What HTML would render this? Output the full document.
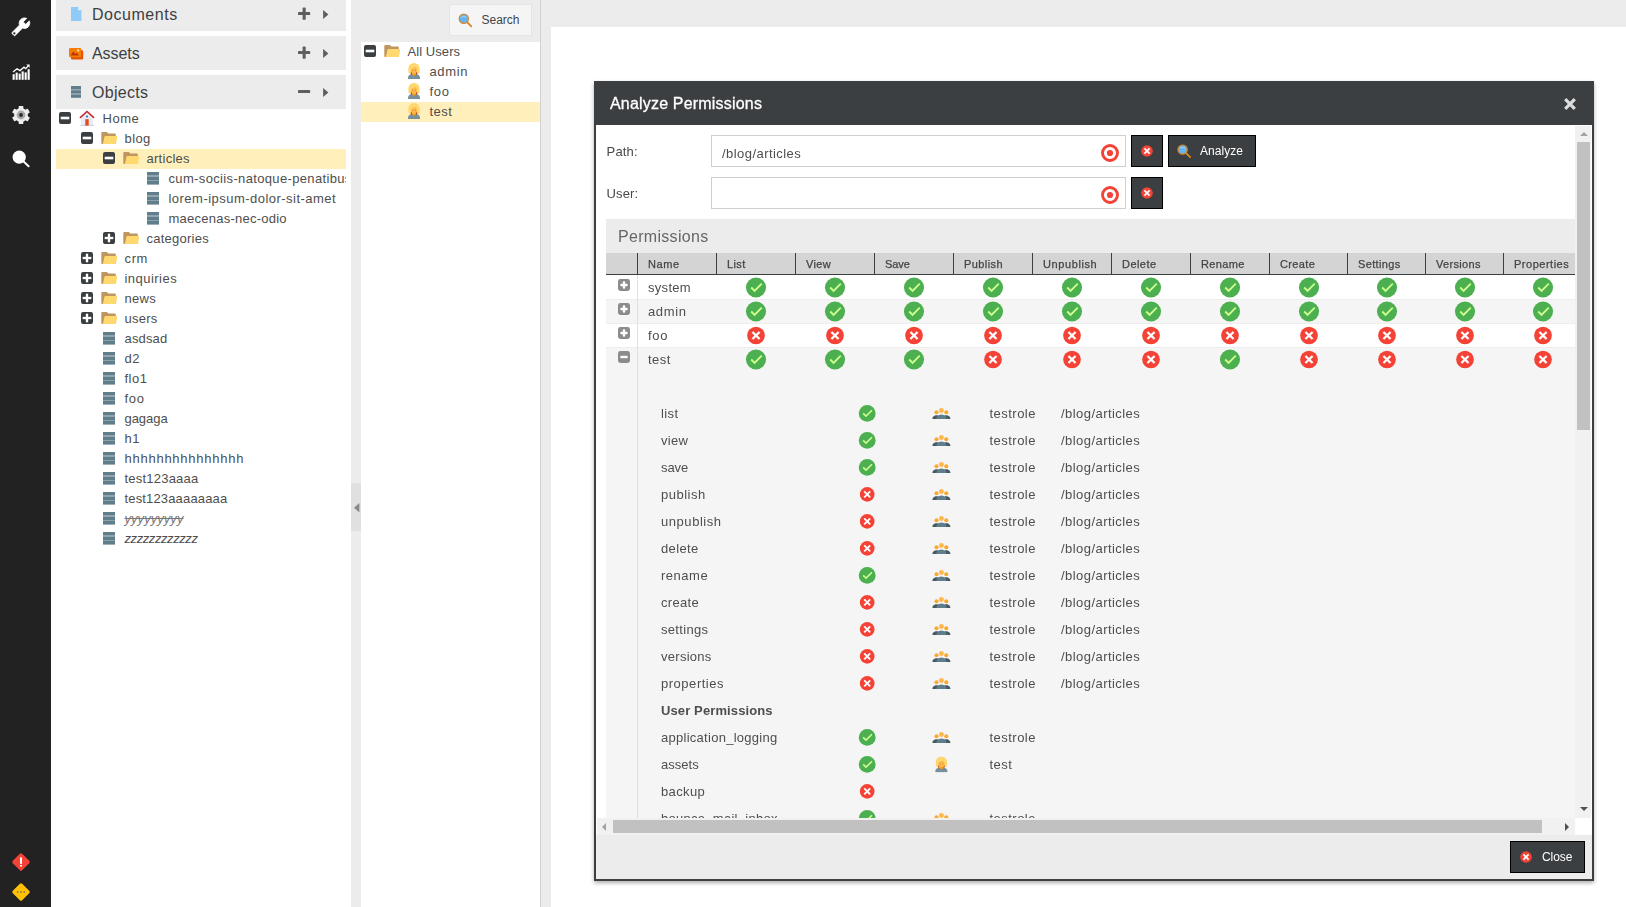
<!DOCTYPE html>
<html lang="en"><head><meta charset="utf-8"><title>Pimcore - Analyze Permissions</title>
<style>
*{box-sizing:border-box;margin:0;padding:0}
html,body{width:1626px;height:907px;overflow:hidden;background:#fff}
body{font-family:"Liberation Sans",sans-serif;font-size:13px;color:#4e4e4e;position:relative}
.a{position:absolute}
svg{display:block;overflow:visible}
#sb{left:0;top:0;width:51px;height:907px;background:#222}
#sb svg{position:absolute}
.ph{left:56px;width:290px;height:34px;background:#ececec}
.ph .t{position:absolute;left:36px;top:1px;line-height:34px;font-size:16px;color:#3c3f41;white-space:nowrap}
.ph svg{position:absolute}
.row{position:absolute;height:20px;line-height:20px;white-space:nowrap;overflow:hidden}
.row.sel{background:#ffefbb}
.row .t{position:absolute;top:0}
.row svg{position:absolute}
.g{background:#ececec}
.btn{position:absolute;background:#3c3f41;border:1px solid #000;color:#fff;font-size:12px;white-space:nowrap}
.btn svg{position:absolute}
.btn .t{position:absolute;top:0;line-height:30px}
.inp{position:absolute;background:#fff;border:1px solid #cfcfcf;height:32px;line-height:30px}
.hc{position:absolute;top:0;height:22px;border-left:1px solid #3c3f41;border-bottom:1px solid #3c3f41;line-height:22px;font-size:11px;color:#444;-webkit-text-stroke:.25px #444;padding-left:10px;white-space:nowrap;overflow:hidden}
.gr{position:absolute;left:0;width:976px;height:24px;border-bottom:1px solid #ededed;line-height:24px}
.gr .n{position:absolute;left:42px;top:0}
.gr svg{position:absolute}
.sr{position:absolute;left:55px;height:27px;line-height:27px;white-space:nowrap}
.sr span.c{position:absolute;top:0}
.sr svg{position:absolute}
</style></head><body>
<svg width="0" height="0" style="position:absolute"><defs>
<symbol id="ok" viewBox="0 0 48 48"><circle fill="#4CAF50" cx="24" cy="24" r="21"/><polygon fill="#CCFF90" points="34.6,14.6 21,28.2 15.4,22.6 12.6,25.4 21,33.8 37.4,17.4"/></symbol>
<symbol id="no" viewBox="0 0 48 48"><circle fill="#F44336" cx="24" cy="24" r="20"/><g fill="#fff"><rect x="12.6" y="21.4" width="22.8" height="5.2" transform="rotate(45 24 24)"/><rect x="12.6" y="21.4" width="22.8" height="5.2" transform="rotate(-45 24 24)"/></g></symbol>
<symbol id="no2" viewBox="0 0 48 48"><circle fill="#F44336" cx="24" cy="24" r="20"/><g fill="#fff"><rect x="11.5" y="21" width="25" height="6" transform="rotate(45 24 24)"/><rect x="11.5" y="21" width="25" height="6" transform="rotate(-45 24 24)"/></g></symbol>
<symbol id="fold" viewBox="0 0 16 16"><path fill="#bf9560" d="M1.3,1.9H5.8L7.4,3.6H13.8Q14.8,3.6 14.8,4.6V13Q14.8,14 13.8,14H1.3Q0.3,14 0.3,13V2.9Q0.3,1.9 1.3,1.9Z"/><path fill="#ffd970" d="M4.4,6H15.4Q16.5,6 16.3,7L15.1,13Q14.9,14 13.9,14H1.9L3.4,6.9Q3.6,6 4.4,6Z"/></symbol>
<symbol id="user" viewBox="0 0 16 16"><path fill="#78909c" d="M2,15.9V14.2Q2,12.2 5,11H11Q14,12.2 14,14.2V15.9Z"/><ellipse cx="8" cy="5.3" rx="5.6" ry="5.3" fill="#ffd76e"/><rect x="2.4" y="4.5" width="11.2" height="6.3" rx="2.6" fill="#ffd76e"/><rect x="4.9" y="8.8" width="1.2" height="2.4" fill="#bf360c"/><rect x="9.9" y="8.8" width="1.2" height="2.4" fill="#bf360c"/><polygon fill="#ff9800" points="6,9.8 10,9.8 9.3,12 8,13.2 6.7,12"/><ellipse cx="8" cy="7.5" rx="3" ry="3.4" fill="#ffb74d"/><path d="M4.6,6.2Q7,5.6 9.4,3.6L11,5.2V3H4.6Z" fill="#ffd76e"/><circle cx="6.6" cy="7.3" r=".55" fill="#b98a3a"/><circle cx="9.5" cy="7.3" r=".55" fill="#b98a3a"/></symbol>
<symbol id="grp" viewBox="0 0 48 48"><circle fill="#FFA726" cx="12" cy="21" r="5"/><circle fill="#FFA726" cx="36" cy="21" r="5"/><path fill="#455A64" d="M2,34.7c0,0,2.8-6.3,10-6.3s10,6.3,10,6.3V38H2V34.7z M46,34.7c0,0-2.8-6.3-10-6.3s-10,6.3-10,6.3V38h20V34.7z"/><circle fill="#FFB74D" cx="24" cy="17" r="6"/><path fill="#607D8B" d="M36,34.1c0,0-3.3-7.5-12-7.5s-12,7.5-12,7.5V38h24V34.1z"/></symbol>
<symbol id="obj" viewBox="0 0 16 16"><g fill="#607d8b"><rect x="2" y="2" width="12" height="3.6"/><rect x="2" y="6.4" width="12" height="3.6"/><rect x="2" y="10.9" width="12" height="3.7"/></g><g fill="#8298a3"><rect x="2" y="5.6" width="12" height=".8"/><rect x="2" y="10" width="12" height=".9"/></g></symbol>
<symbol id="home" viewBox="0 0 16 16"><path fill="#e8eaf6" d="M2.2,7.4L8,2.4L13.8,7.4V15.6H2.2Z"/><path fill="#c5cae9" d="M1,14.8H15V15.8H1Z"/><path fill="#e64a19" d="M6.3,9.2H9.7V15.6H6.3Z"/><path fill="none" stroke="#c62828" stroke-width="1.5" d="M0.9,7.9L8,1.5L15.1,7.9"/><circle cx="8" cy="6.6" r="1" fill="#1565c0"/></symbol>
<symbol id="exm" viewBox="0 0 12 12"><rect width="12" height="12" rx="2" fill="#3c3f41"/><rect x="1.7" y="4.7" width="8.6" height="2.6" fill="#fff"/></symbol>
<symbol id="exp" viewBox="0 0 12 12"><rect width="12" height="12" rx="2" fill="#3c3f41"/><rect x="1.7" y="4.85" width="8.6" height="2.3" fill="#fff"/><rect x="4.85" y="1.7" width="2.3" height="8.6" fill="#fff"/></symbol>
<symbol id="gxm" viewBox="0 0 12 12"><rect width="12" height="12" rx="2.4" fill="#8c8c8c"/><rect x="2.4" y="4.8" width="7.2" height="2.4" fill="#fff"/></symbol>
<symbol id="gxp" viewBox="0 0 12 12"><rect width="12" height="12" rx="2.4" fill="#8c8c8c"/><rect x="2.4" y="4.8" width="7.2" height="2.4" fill="#fff"/><rect x="4.8" y="2.4" width="2.4" height="7.2" fill="#fff"/></symbol>
<symbol id="mag" viewBox="0 0 16 16"><path d="M9.6,9.6L14.2,14.2" stroke="#d4882a" stroke-width="1.9" stroke-linecap="round"/><circle cx="6.2" cy="6.2" r="4.9" fill="#64b5f6" stroke="#d4882a" stroke-width="1.35"/><path d="M3.6,4.6Q6.2,2.6 8.8,4.6" stroke="#bbdefb" stroke-width=".8" fill="none"/></symbol>
<symbol id="tgt" viewBox="0 0 20 20"><circle cx="10" cy="10" r="7.5" fill="none" stroke="#f44336" stroke-width="2.9"/><circle cx="10" cy="10" r="3.1" fill="#f44336"/></symbol>
</defs></svg>
<div class="a g" style="left:351px;top:0;width:10px;height:907px"></div>
<div class="a" style="left:351px;top:483px;width:10px;height:48px;background:#e0e0e0"></div>
<svg class="a" style="left:353.7px;top:502.5px" width="5.4" height="9.4" viewBox="0 0 5.4 9.4"><path d="M5.4,0V9.4L0,4.7Z" fill="#888"/></svg>
<div class="a g" style="left:361px;top:0;width:180px;height:42px"></div>
<div class="a" style="left:540px;top:0;width:1px;height:907px;background:#d0d0d0"></div>
<div class="a g" style="left:541px;top:0;width:10px;height:907px"></div>
<div class="a g" style="left:551px;top:0;width:1075px;height:27px"></div>
<div id="sb" class="a">
<svg style="left:11px;top:17px" width="19.6" height="19.6" viewBox="0 0 24 24"><g transform="translate(24,0) scale(-1,1)"><path fill="#fff" stroke="#fff" stroke-width=".9" stroke-linejoin="round" d="M22.7 19l-9.1-9.1c.9-2.3.4-5-1.5-6.9-2-2-5-2.4-7.4-1.3L9 6 6 9 1.6 4.7C.4 7.1.9 10.1 2.9 12.1c1.9 1.9 4.6 2.4 6.9 1.5l9.1 9.1c.4.4 1 .4 1.4 0l2.3-2.3c.5-.4.5-1.1.1-1.4z"/><circle cx="19.9" cy="20" r="1.4" fill="#222"/></g></svg>
<svg style="left:12px;top:63px" width="18" height="17" viewBox="0 0 18 17"><g fill="#fff"><rect x=".6" y="11.2" width="2.1" height="5.6"/><rect x="3.6" y="9.6" width="2.1" height="7.2"/><rect x="6.6" y="10.6" width="2.1" height="6.2"/><rect x="9.6" y="8.4" width="2.1" height="8.4"/><rect x="12.6" y="9.4" width="2.1" height="7.4"/><rect x="15.6" y="6.2" width="2.1" height="10.6"/></g><path d="M1,9L5,5.8L8,7.6L12,4.2L13.6,5.6L16.2,3" fill="none" stroke="#fff" stroke-width="1.3"/><path d="M14.2,1.4H17.6V4.8Z" fill="#fff"/></svg>
<svg style="left:12px;top:106.4px" width="18" height="18" viewBox="-9 -9 18 18"><g fill="#eee"><circle r="6.9"/><rect x="-2.3" y="-9" width="4.6" height="4" rx=".6" transform="rotate(0)"/><rect x="-2.3" y="-9" width="4.6" height="4" rx=".6" transform="rotate(60)"/><rect x="-2.3" y="-9" width="4.6" height="4" rx=".6" transform="rotate(120)"/><rect x="-2.3" y="-9" width="4.6" height="4" rx=".6" transform="rotate(180)"/><rect x="-2.3" y="-9" width="4.6" height="4" rx=".6" transform="rotate(240)"/><rect x="-2.3" y="-9" width="4.6" height="4" rx=".6" transform="rotate(300)"/></g><circle r="4.4" fill="#aaa"/><circle r="1.9" fill="#2a2a2a"/></svg>
<svg style="left:11px;top:149px" width="20" height="20" viewBox="0 0 20 20"><circle cx="8.2" cy="8.2" r="6.6" fill="#fff"/><path d="M12.6,12.6L17.6,17.2" stroke="#fff" stroke-width="2" stroke-linecap="round"/></svg>
<svg style="left:11px;top:852px" width="20" height="20" viewBox="-10 -10 20 20"><rect x="-6.6" y="-6.6" width="13.2" height="13.2" rx="1.6" transform="rotate(45)" fill="#f44336"/><rect x="-1" y="-4.6" width="2" height="6.4" fill="#fff"/><rect x="-1" y="3" width="2" height="1.5" fill="#fff"/></svg>
<svg style="left:11px;top:882px" width="20" height="20" viewBox="-10 -10 20 20"><rect x="-6.6" y="-6.6" width="13.2" height="13.2" rx="1.6" transform="rotate(45)" fill="#ffc107"/><g fill="#7a7a52"><rect x="-4.1" y="-.8" width="1.6" height="1.6"/><rect x="-.8" y="-.8" width="1.6" height="1.6"/><rect x="2.5" y="-.8" width="1.6" height="1.6"/></g></svg>
</div>
<div class="a ph" style="top:-3px"><svg style="left:14.8px;top:9.9px" width="10.4" height="14" viewBox="0 0 10.4 14"><path d="M0,0H7.2L10.4,3.2V14H0Z" fill="#90caf9"/><path d="M7.2,0V3.2H10.4Z" fill="#e1f5fe"/></svg><span class="t"><span style="letter-spacing:0.534px;">Documents</span></span><svg style="left:242px;top:11px" width="13" height="13" viewBox="0 0 13 13"><g fill="#5c5e60"><rect x="0" y="4.1" width="12.2" height="3" rx=".9"/><rect x="4.6" y="-.5" width="3.1" height="12.3" rx=".9"/></g></svg><svg style="left:267px;top:12px" width="6" height="11" viewBox="0 0 6 11"><path d="M0.1,0.9L5.4,5.45L0.1,10Z" fill="#5c5e60"/></svg></div>
<div class="a ph" style="top:36px"><svg style="left:13px;top:11.5px" width="14.2" height="11.4" viewBox="0 0 14.2 11.4"><rect x="2" y="2.2" width="12.2" height="9.2" rx="1.2" fill="#e65100"/><rect x="0" y="0" width="12.2" height="9.2" rx="1.2" fill="#f57c00"/><path d="M1.6,7.6L4.4,3.2L6.4,6L7.8,4.6L10,7.6Z" fill="#bf360c"/><rect x="8.2" y="1.6" width="2" height="1.7" fill="#fff3e0"/></svg><span class="t"><span style="letter-spacing:-0.061px;">Assets</span></span><svg style="left:242px;top:11px" width="13" height="13" viewBox="0 0 13 13"><g fill="#5c5e60"><rect x="0" y="4.1" width="12.2" height="3" rx=".9"/><rect x="4.6" y="-.5" width="3.1" height="12.3" rx=".9"/></g></svg><svg style="left:267px;top:12px" width="6" height="11" viewBox="0 0 6 11"><path d="M0.1,0.9L5.4,5.45L0.1,10Z" fill="#5c5e60"/></svg></div>
<div class="a ph" style="top:75px"><svg style="left:15px;top:11.2px" width="10" height="11.8" viewBox="0 0 10 11.8"><g fill="#607d8b"><rect width="10" height="3.4"/><rect y="4.2" width="10" height="3.4"/><rect y="8.4" width="10" height="3.4"/></g><g fill="#7f96a1"><rect y="3.4" width="10" height=".8"/><rect y="7.6" width="10" height=".8"/></g></svg><span class="t"><span style="letter-spacing:0.278px;">Objects</span></span><svg style="left:242px;top:11px" width="13" height="13" viewBox="0 0 13 13"><g fill="#5c5e60"><rect x="0" y="4.1" width="12.2" height="3" rx=".9"/></g></svg><svg style="left:267px;top:12px" width="6" height="11" viewBox="0 0 6 11"><path d="M0.1,0.9L5.4,5.45L0.1,10Z" fill="#5c5e60"/></svg></div>
<div class="row" style="left:56px;top:109px;width:290px"><svg style="left:3px;top:3px" width="12" height="12"><use href="#exm" x="0" y="0" width="12" height="12"/></svg><svg style="left:23px;top:1px" width="16" height="16"><use href="#home" x="0" y="0" width="16" height="16"/></svg><span class="t" style="left:46.5px;"><span style="letter-spacing:0.538px;">Home</span></span></div>
<div class="row" style="left:56px;top:129px;width:290px"><svg style="left:25px;top:3px" width="12" height="12"><use href="#exm" x="0" y="0" width="12" height="12"/></svg><svg style="left:45px;top:1px" width="16" height="16"><use href="#fold" x="0" y="0" width="16" height="16"/></svg><span class="t" style="left:68.5px;"><span style="letter-spacing:0.413px;">blog</span></span></div>
<div class="row sel" style="left:56px;top:149px;width:290px"><svg style="left:47px;top:3px" width="12" height="12"><use href="#exm" x="0" y="0" width="12" height="12"/></svg><svg style="left:67px;top:1px" width="16" height="16"><use href="#fold" x="0" y="0" width="16" height="16"/></svg><span class="t" style="left:90.5px;"><span style="letter-spacing:0.276px;">articles</span></span></div>
<div class="row" style="left:56px;top:169px;width:290px"><svg style="left:89px;top:1px" width="16" height="16"><use href="#obj" x="0" y="0" width="16" height="16"/></svg><span class="t" style="left:112.5px;"><span style="letter-spacing:0.350px;">cum-sociis-natoque-penatibus</span></span></div>
<div class="row" style="left:56px;top:189px;width:290px"><svg style="left:89px;top:1px" width="16" height="16"><use href="#obj" x="0" y="0" width="16" height="16"/></svg><span class="t" style="left:112.5px;"><span style="letter-spacing:0.474px;">lorem-ipsum-dolor-sit-amet</span></span></div>
<div class="row" style="left:56px;top:209px;width:290px"><svg style="left:89px;top:1px" width="16" height="16"><use href="#obj" x="0" y="0" width="16" height="16"/></svg><span class="t" style="left:112.5px;"><span style="letter-spacing:0.242px;">maecenas-nec-odio</span></span></div>
<div class="row" style="left:56px;top:229px;width:290px"><svg style="left:47px;top:3px" width="12" height="12"><use href="#exp" x="0" y="0" width="12" height="12"/></svg><svg style="left:67px;top:1px" width="16" height="16"><use href="#fold" x="0" y="0" width="16" height="16"/></svg><span class="t" style="left:90.5px;"><span style="letter-spacing:0.239px;">categories</span></span></div>
<div class="row" style="left:56px;top:249px;width:290px"><svg style="left:25px;top:3px" width="12" height="12"><use href="#exp" x="0" y="0" width="12" height="12"/></svg><svg style="left:45px;top:1px" width="16" height="16"><use href="#fold" x="0" y="0" width="16" height="16"/></svg><span class="t" style="left:68.5px;"><span style="letter-spacing:0.643px;">crm</span></span></div>
<div class="row" style="left:56px;top:269px;width:290px"><svg style="left:25px;top:3px" width="12" height="12"><use href="#exp" x="0" y="0" width="12" height="12"/></svg><svg style="left:45px;top:1px" width="16" height="16"><use href="#fold" x="0" y="0" width="16" height="16"/></svg><span class="t" style="left:68.5px;"><span style="letter-spacing:0.464px;">inquiries</span></span></div>
<div class="row" style="left:56px;top:289px;width:290px"><svg style="left:25px;top:3px" width="12" height="12"><use href="#exp" x="0" y="0" width="12" height="12"/></svg><svg style="left:45px;top:1px" width="16" height="16"><use href="#fold" x="0" y="0" width="16" height="16"/></svg><span class="t" style="left:68.5px;"><span style="letter-spacing:0.309px;">news</span></span></div>
<div class="row" style="left:56px;top:309px;width:290px"><svg style="left:25px;top:3px" width="12" height="12"><use href="#exp" x="0" y="0" width="12" height="12"/></svg><svg style="left:45px;top:1px" width="16" height="16"><use href="#fold" x="0" y="0" width="16" height="16"/></svg><span class="t" style="left:68.5px;"><span style="letter-spacing:0.239px;">users</span></span></div>
<div class="row" style="left:56px;top:329px;width:290px"><svg style="left:45px;top:1px" width="16" height="16"><use href="#obj" x="0" y="0" width="16" height="16"/></svg><span class="t" style="left:68.5px;"><span style="letter-spacing:0.146px;">asdsad</span></span></div>
<div class="row" style="left:56px;top:349px;width:290px"><svg style="left:45px;top:1px" width="16" height="16"><use href="#obj" x="0" y="0" width="16" height="16"/></svg><span class="t" style="left:68.5px;"><span style="letter-spacing:0.470px;">d2</span></span></div>
<div class="row" style="left:56px;top:369px;width:290px"><svg style="left:45px;top:1px" width="16" height="16"><use href="#obj" x="0" y="0" width="16" height="16"/></svg><span class="t" style="left:68.5px;"><span style="letter-spacing:0.505px;">flo1</span></span></div>
<div class="row" style="left:56px;top:389px;width:290px"><svg style="left:45px;top:1px" width="16" height="16"><use href="#obj" x="0" y="0" width="16" height="16"/></svg><span class="t" style="left:68.5px;"><span style="letter-spacing:0.679px;">foo</span></span></div>
<div class="row" style="left:56px;top:409px;width:290px"><svg style="left:45px;top:1px" width="16" height="16"><use href="#obj" x="0" y="0" width="16" height="16"/></svg><span class="t" style="left:68.5px;"><span style="letter-spacing:-0.054px;">gagaga</span></span></div>
<div class="row" style="left:56px;top:429px;width:290px"><svg style="left:45px;top:1px" width="16" height="16"><use href="#obj" x="0" y="0" width="16" height="16"/></svg><span class="t" style="left:68.5px;"><span style="letter-spacing:0.476px;">h1</span></span></div>
<div class="row" style="left:56px;top:449px;width:290px"><svg style="left:45px;top:1px" width="16" height="16"><use href="#obj" x="0" y="0" width="16" height="16"/></svg><span class="t" style="left:68.5px;"><span style="letter-spacing:0.749px;">hhhhhhhhhhhhhhh</span></span></div>
<div class="row" style="left:56px;top:469px;width:290px"><svg style="left:45px;top:1px" width="16" height="16"><use href="#obj" x="0" y="0" width="16" height="16"/></svg><span class="t" style="left:68.5px;"><span style="letter-spacing:0.212px;">test123aaaa</span></span></div>
<div class="row" style="left:56px;top:489px;width:290px"><svg style="left:45px;top:1px" width="16" height="16"><use href="#obj" x="0" y="0" width="16" height="16"/></svg><span class="t" style="left:68.5px;"><span style="letter-spacing:0.155px;">test123aaaaaaaa</span></span></div>
<div class="row" style="left:56px;top:509px;width:290px"><svg style="left:45px;top:1px" width="16" height="16"><use href="#obj" x="0" y="0" width="16" height="16"/></svg><span class="t" style="left:68.5px;color:#777;text-decoration:line-through"><span style="letter-spacing:0.051px;font-style:italic">yyyyyyyyy</span></span></div>
<div class="row" style="left:56px;top:529px;width:290px"><svg style="left:45px;top:1px" width="16" height="16"><use href="#obj" x="0" y="0" width="16" height="16"/></svg><span class="t" style="left:68.5px;"><span style="letter-spacing:-0.419px;font-style:italic">zzzzzzzzzzzz</span></span></div>
<div class="a" style="left:449px;top:4px;width:83px;height:32px;background:#f5f5f5;border:1px solid #e4e4e4;font-size:12px;color:#444"><svg class="a" style="left:7.6px;top:7.6px" width="15" height="15"><use href="#mag"/></svg><span class="a" style="left:31.5px;top:0;line-height:30px"><span style="letter-spacing:-0.009px;">Search</span></span></div>
<div class="row" style="left:361px;top:42px;width:179px"><svg style="left:3px;top:3px" width="12" height="12"><use href="#exm" x="0" y="0" width="12" height="12"/></svg><svg style="left:23px;top:1px" width="16" height="16"><use href="#fold" x="0" y="0" width="16" height="16"/></svg><span class="t" style="left:46.5px;"><span style="letter-spacing:0.071px;">All Users</span></span></div>
<div class="row" style="left:361px;top:62px;width:179px"><svg style="left:45px;top:1px" width="16" height="16"><use href="#user" x="0" y="0" width="16" height="16"/></svg><span class="t" style="left:68.5px;"><span style="letter-spacing:0.630px;">admin</span></span></div>
<div class="row" style="left:361px;top:82px;width:179px"><svg style="left:45px;top:1px" width="16" height="16"><use href="#user" x="0" y="0" width="16" height="16"/></svg><span class="t" style="left:68.5px;"><span style="letter-spacing:0.679px;">foo</span></span></div>
<div class="row sel" style="left:361px;top:102px;width:179px"><svg style="left:45px;top:1px" width="16" height="16"><use href="#user" x="0" y="0" width="16" height="16"/></svg><span class="t" style="left:68.5px;"><span style="letter-spacing:0.430px;">test</span></span></div>
<div id="dlg" class="a" style="left:594px;top:81px;width:1000px;height:800px;border:2px solid #3c3f41;background:#fff;will-change:transform;box-shadow:0 2px 4px rgba(0,0,0,.32)">
<div class="a" style="left:0;top:0;width:996px;height:42px;background:#3c3f41"></div>
<div class="a" style="left:14px;top:0px;line-height:42px;font-size:16px;color:#fff;-webkit-text-stroke:.3px #fff;white-space:nowrap"><span style="letter-spacing:0.188px;">Analyze Permissions</span></div>
<svg class="a" style="left:968px;top:15px" width="12" height="12" viewBox="0 0 12 12"><path d="M1.2,1.2L10.8,10.8M10.8,1.2L1.2,10.8" stroke="#ddd" stroke-width="3.2"/></svg>
<div class="a" style="left:10.6px;top:53px;line-height:32px;white-space:nowrap;color:#484848"><span style="letter-spacing:0.146px;">Path:</span></div>
<div class="inp" style="left:115px;top:52px;width:415px"><span class="a" style="left:10px;top:3px;line-height:30px;white-space:nowrap"><span style="letter-spacing:0.442px;">/blog/articles</span></span><svg class="a" style="left:388px;top:7px" width="20" height="20"><use href="#tgt"/></svg></div>
<div class="btn" style="left:535px;top:52px;width:32px;height:32px"><svg style="left:8px;top:8px" width="14" height="14"><use href="#no2" x="0" y="0" width="14" height="14"/></svg></div>
<div class="a" style="left:10.6px;top:95px;line-height:32px;white-space:nowrap;color:#484848"><span style="letter-spacing:0.133px;">User:</span></div>
<div class="inp" style="left:115px;top:94px;width:415px"><svg class="a" style="left:388px;top:7px" width="20" height="20"><use href="#tgt"/></svg></div>
<div class="btn" style="left:535px;top:94px;width:32px;height:32px"><svg style="left:8px;top:8px" width="14" height="14"><use href="#no2" x="0" y="0" width="14" height="14"/></svg></div>
<div class="btn" style="left:572px;top:52px;width:88px;height:32px"><svg style="left:7px;top:7px" width="16" height="16"><use href="#mag" x="0.8" y="0.8" width="15" height="15"/></svg><span class="t" style="left:31px"><span style="letter-spacing:0.053px;">Analyze</span></span></div>
<div id="grid" class="a" style="left:10px;top:136px;width:969px;height:599px;overflow:hidden;background:#f5f5f5">
<div class="a g" style="left:0;top:0;width:969px;height:34px"></div>
<div class="a" style="left:12px;top:1px;line-height:34px;font-size:16px;color:#666;white-space:nowrap"><span style="letter-spacing:0.306px;">Permissions</span></div>
<div class="a" style="left:0;top:34px;width:976px;height:22px;background:#d4d4d4;border-bottom:1px solid #3c3f41"></div>
<div class="hc" style="left:31px;top:34px;width:79px"><span style="letter-spacing:0.627px;">Name</span></div>
<div class="hc" style="left:110px;top:34px;width:79px"><span style="letter-spacing:0.397px;">List</span></div>
<div class="hc" style="left:189px;top:34px;width:79px"><span style="letter-spacing:0.348px;">View</span></div>
<div class="hc" style="left:268px;top:34px;width:79px"><span style="letter-spacing:-0.105px;">Save</span></div>
<div class="hc" style="left:347px;top:34px;width:79px"><span style="letter-spacing:0.428px;">Publish</span></div>
<div class="hc" style="left:426px;top:34px;width:79px"><span style="letter-spacing:0.599px;">Unpublish</span></div>
<div class="hc" style="left:505px;top:34px;width:79px"><span style="letter-spacing:0.447px;">Delete</span></div>
<div class="hc" style="left:584px;top:34px;width:79px"><span style="letter-spacing:0.335px;">Rename</span></div>
<div class="hc" style="left:663px;top:34px;width:78px"><span style="letter-spacing:0.346px;">Create</span></div>
<div class="hc" style="left:741px;top:34px;width:78px"><span style="letter-spacing:0.351px;">Settings</span></div>
<div class="hc" style="left:819px;top:34px;width:78px"><span style="letter-spacing:0.326px;">Versions</span></div>
<div class="hc" style="left:897px;top:34px;width:79px"><span style="letter-spacing:0.511px;">Properties</span></div>
<div class="gr" style="top:57px;background:#fff"><svg style="left:12px;top:3px" width="12" height="12"><use href="#gxp" x="0" y="0" width="12" height="12"/></svg><span class="n"><span style="letter-spacing:0.293px;">system</span></span><svg style="left:138px;top:0px" width="24" height="23"><use href="#ok" x="0.5" y="0" width="23" height="23"/></svg><svg style="left:217px;top:0px" width="24" height="23"><use href="#ok" x="0.5" y="0" width="23" height="23"/></svg><svg style="left:296px;top:0px" width="24" height="23"><use href="#ok" x="0.5" y="0" width="23" height="23"/></svg><svg style="left:375px;top:0px" width="24" height="23"><use href="#ok" x="0.5" y="0" width="23" height="23"/></svg><svg style="left:454px;top:0px" width="24" height="23"><use href="#ok" x="0.5" y="0" width="23" height="23"/></svg><svg style="left:533px;top:0px" width="24" height="23"><use href="#ok" x="0.5" y="0" width="23" height="23"/></svg><svg style="left:612px;top:0px" width="24" height="23"><use href="#ok" x="0.5" y="0" width="23" height="23"/></svg><svg style="left:691px;top:0px" width="24" height="23"><use href="#ok" x="0.5" y="0" width="23" height="23"/></svg><svg style="left:769px;top:0px" width="24" height="23"><use href="#ok" x="0.5" y="0" width="23" height="23"/></svg><svg style="left:847px;top:0px" width="24" height="23"><use href="#ok" x="0.5" y="0" width="23" height="23"/></svg><svg style="left:925px;top:0px" width="24" height="23"><use href="#ok" x="0.5" y="0" width="23" height="23"/></svg></div>
<div class="gr" style="top:81px;background:#f5f5f5"><svg style="left:12px;top:3px" width="12" height="12"><use href="#gxp" x="0" y="0" width="12" height="12"/></svg><span class="n"><span style="letter-spacing:0.630px;">admin</span></span><svg style="left:138px;top:0px" width="24" height="23"><use href="#ok" x="0.5" y="0" width="23" height="23"/></svg><svg style="left:217px;top:0px" width="24" height="23"><use href="#ok" x="0.5" y="0" width="23" height="23"/></svg><svg style="left:296px;top:0px" width="24" height="23"><use href="#ok" x="0.5" y="0" width="23" height="23"/></svg><svg style="left:375px;top:0px" width="24" height="23"><use href="#ok" x="0.5" y="0" width="23" height="23"/></svg><svg style="left:454px;top:0px" width="24" height="23"><use href="#ok" x="0.5" y="0" width="23" height="23"/></svg><svg style="left:533px;top:0px" width="24" height="23"><use href="#ok" x="0.5" y="0" width="23" height="23"/></svg><svg style="left:612px;top:0px" width="24" height="23"><use href="#ok" x="0.5" y="0" width="23" height="23"/></svg><svg style="left:691px;top:0px" width="24" height="23"><use href="#ok" x="0.5" y="0" width="23" height="23"/></svg><svg style="left:769px;top:0px" width="24" height="23"><use href="#ok" x="0.5" y="0" width="23" height="23"/></svg><svg style="left:847px;top:0px" width="24" height="23"><use href="#ok" x="0.5" y="0" width="23" height="23"/></svg><svg style="left:925px;top:0px" width="24" height="23"><use href="#ok" x="0.5" y="0" width="23" height="23"/></svg></div>
<div class="gr" style="top:105px;background:#fff"><svg style="left:12px;top:3px" width="12" height="12"><use href="#gxp" x="0" y="0" width="12" height="12"/></svg><span class="n"><span style="letter-spacing:0.679px;">foo</span></span><svg style="left:139px;top:0px" width="22" height="23"><use href="#no" x="0.4" y="0.9" width="21.2" height="21.2"/></svg><svg style="left:218px;top:0px" width="22" height="23"><use href="#no" x="0.4" y="0.9" width="21.2" height="21.2"/></svg><svg style="left:297px;top:0px" width="22" height="23"><use href="#no" x="0.4" y="0.9" width="21.2" height="21.2"/></svg><svg style="left:376px;top:0px" width="22" height="23"><use href="#no" x="0.4" y="0.9" width="21.2" height="21.2"/></svg><svg style="left:455px;top:0px" width="22" height="23"><use href="#no" x="0.4" y="0.9" width="21.2" height="21.2"/></svg><svg style="left:534px;top:0px" width="22" height="23"><use href="#no" x="0.4" y="0.9" width="21.2" height="21.2"/></svg><svg style="left:613px;top:0px" width="22" height="23"><use href="#no" x="0.4" y="0.9" width="21.2" height="21.2"/></svg><svg style="left:692px;top:0px" width="22" height="23"><use href="#no" x="0.4" y="0.9" width="21.2" height="21.2"/></svg><svg style="left:770px;top:0px" width="22" height="23"><use href="#no" x="0.4" y="0.9" width="21.2" height="21.2"/></svg><svg style="left:848px;top:0px" width="22" height="23"><use href="#no" x="0.4" y="0.9" width="21.2" height="21.2"/></svg><svg style="left:926px;top:0px" width="22" height="23"><use href="#no" x="0.4" y="0.9" width="21.2" height="21.2"/></svg></div>
<div class="gr" style="top:129px;background:#f5f5f5;border-bottom-color:#f5f5f5"><svg style="left:12px;top:3px" width="12" height="12"><use href="#gxm" x="0" y="0" width="12" height="12"/></svg><span class="n"><span style="letter-spacing:0.430px;">test</span></span><svg style="left:138px;top:0px" width="24" height="23"><use href="#ok" x="0.5" y="0" width="23" height="23"/></svg><svg style="left:217px;top:0px" width="24" height="23"><use href="#ok" x="0.5" y="0" width="23" height="23"/></svg><svg style="left:296px;top:0px" width="24" height="23"><use href="#ok" x="0.5" y="0" width="23" height="23"/></svg><svg style="left:376px;top:0px" width="22" height="23"><use href="#no" x="0.4" y="0.9" width="21.2" height="21.2"/></svg><svg style="left:455px;top:0px" width="22" height="23"><use href="#no" x="0.4" y="0.9" width="21.2" height="21.2"/></svg><svg style="left:534px;top:0px" width="22" height="23"><use href="#no" x="0.4" y="0.9" width="21.2" height="21.2"/></svg><svg style="left:612px;top:0px" width="24" height="23"><use href="#ok" x="0.5" y="0" width="23" height="23"/></svg><svg style="left:692px;top:0px" width="22" height="23"><use href="#no" x="0.4" y="0.9" width="21.2" height="21.2"/></svg><svg style="left:770px;top:0px" width="22" height="23"><use href="#no" x="0.4" y="0.9" width="21.2" height="21.2"/></svg><svg style="left:848px;top:0px" width="22" height="23"><use href="#no" x="0.4" y="0.9" width="21.2" height="21.2"/></svg><svg style="left:926px;top:0px" width="22" height="23"><use href="#no" x="0.4" y="0.9" width="21.2" height="21.2"/></svg></div>
<div class="a" style="left:0;top:56px;width:976px;height:1px;background:#fff"></div>
<div class="a" style="left:31px;top:56px;width:1px;height:560px;background:#e0e0e0"></div>
<div class="sr" style="top:181px"><span class="c" style="left:0px"><span style="letter-spacing:0.370px;">list</span></span><svg style="left:196px;top:3px" width="20" height="20"><use href="#ok" x="0.6" y="0.8" width="19.2" height="19.2"/></svg><svg style="left:270px;top:3px" width="21" height="21"><use href="#grp" x="0.65" y="0.65" width="19.5" height="19.5"/></svg><span class="c" style="left:328.5px"><span style="letter-spacing:0.473px;">testrole</span></span><span class="c" style="left:400px"><span style="letter-spacing:0.442px;">/blog/articles</span></span></div>
<div class="sr" style="top:208px"><span class="c" style="left:0px"><span style="letter-spacing:0.300px;">view</span></span><svg style="left:196px;top:3px" width="20" height="20"><use href="#ok" x="0.6" y="0.8" width="19.2" height="19.2"/></svg><svg style="left:270px;top:3px" width="21" height="21"><use href="#grp" x="0.65" y="0.65" width="19.5" height="19.5"/></svg><span class="c" style="left:328.5px"><span style="letter-spacing:0.473px;">testrole</span></span><span class="c" style="left:400px"><span style="letter-spacing:0.442px;">/blog/articles</span></span></div>
<div class="sr" style="top:235px"><span class="c" style="left:0px"><span style="letter-spacing:-0.056px;">save</span></span><svg style="left:196px;top:3px" width="20" height="20"><use href="#ok" x="0.6" y="0.8" width="19.2" height="19.2"/></svg><svg style="left:270px;top:3px" width="21" height="21"><use href="#grp" x="0.65" y="0.65" width="19.5" height="19.5"/></svg><span class="c" style="left:328.5px"><span style="letter-spacing:0.473px;">testrole</span></span><span class="c" style="left:400px"><span style="letter-spacing:0.442px;">/blog/articles</span></span></div>
<div class="sr" style="top:262px"><span class="c" style="left:0px"><span style="letter-spacing:0.496px;">publish</span></span><svg style="left:197px;top:4px" width="18" height="19"><use href="#no" x="0.4" y="0.6" width="17.6" height="17.6"/></svg><svg style="left:270px;top:3px" width="21" height="21"><use href="#grp" x="0.65" y="0.65" width="19.5" height="19.5"/></svg><span class="c" style="left:328.5px"><span style="letter-spacing:0.473px;">testrole</span></span><span class="c" style="left:400px"><span style="letter-spacing:0.442px;">/blog/articles</span></span></div>
<div class="sr" style="top:289px"><span class="c" style="left:0px"><span style="letter-spacing:0.552px;">unpublish</span></span><svg style="left:197px;top:4px" width="18" height="19"><use href="#no" x="0.4" y="0.6" width="17.6" height="17.6"/></svg><svg style="left:270px;top:3px" width="21" height="21"><use href="#grp" x="0.65" y="0.65" width="19.5" height="19.5"/></svg><span class="c" style="left:328.5px"><span style="letter-spacing:0.473px;">testrole</span></span><span class="c" style="left:400px"><span style="letter-spacing:0.442px;">/blog/articles</span></span></div>
<div class="sr" style="top:316px"><span class="c" style="left:0px"><span style="letter-spacing:0.384px;">delete</span></span><svg style="left:197px;top:4px" width="18" height="19"><use href="#no" x="0.4" y="0.6" width="17.6" height="17.6"/></svg><svg style="left:270px;top:3px" width="21" height="21"><use href="#grp" x="0.65" y="0.65" width="19.5" height="19.5"/></svg><span class="c" style="left:328.5px"><span style="letter-spacing:0.473px;">testrole</span></span><span class="c" style="left:400px"><span style="letter-spacing:0.442px;">/blog/articles</span></span></div>
<div class="sr" style="top:343px"><span class="c" style="left:0px"><span style="letter-spacing:0.519px;">rename</span></span><svg style="left:196px;top:3px" width="20" height="20"><use href="#ok" x="0.6" y="0.8" width="19.2" height="19.2"/></svg><svg style="left:270px;top:3px" width="21" height="21"><use href="#grp" x="0.65" y="0.65" width="19.5" height="19.5"/></svg><span class="c" style="left:328.5px"><span style="letter-spacing:0.473px;">testrole</span></span><span class="c" style="left:400px"><span style="letter-spacing:0.442px;">/blog/articles</span></span></div>
<div class="sr" style="top:370px"><span class="c" style="left:0px"><span style="letter-spacing:0.295px;">create</span></span><svg style="left:197px;top:4px" width="18" height="19"><use href="#no" x="0.4" y="0.6" width="17.6" height="17.6"/></svg><svg style="left:270px;top:3px" width="21" height="21"><use href="#grp" x="0.65" y="0.65" width="19.5" height="19.5"/></svg><span class="c" style="left:328.5px"><span style="letter-spacing:0.473px;">testrole</span></span><span class="c" style="left:400px"><span style="letter-spacing:0.442px;">/blog/articles</span></span></div>
<div class="sr" style="top:397px"><span class="c" style="left:0px"><span style="letter-spacing:0.308px;">settings</span></span><svg style="left:197px;top:4px" width="18" height="19"><use href="#no" x="0.4" y="0.6" width="17.6" height="17.6"/></svg><svg style="left:270px;top:3px" width="21" height="21"><use href="#grp" x="0.65" y="0.65" width="19.5" height="19.5"/></svg><span class="c" style="left:328.5px"><span style="letter-spacing:0.473px;">testrole</span></span><span class="c" style="left:400px"><span style="letter-spacing:0.442px;">/blog/articles</span></span></div>
<div class="sr" style="top:424px"><span class="c" style="left:0px"><span style="letter-spacing:0.279px;">versions</span></span><svg style="left:197px;top:4px" width="18" height="19"><use href="#no" x="0.4" y="0.6" width="17.6" height="17.6"/></svg><svg style="left:270px;top:3px" width="21" height="21"><use href="#grp" x="0.65" y="0.65" width="19.5" height="19.5"/></svg><span class="c" style="left:328.5px"><span style="letter-spacing:0.473px;">testrole</span></span><span class="c" style="left:400px"><span style="letter-spacing:0.442px;">/blog/articles</span></span></div>
<div class="sr" style="top:451px"><span class="c" style="left:0px"><span style="letter-spacing:0.526px;">properties</span></span><svg style="left:197px;top:4px" width="18" height="19"><use href="#no" x="0.4" y="0.6" width="17.6" height="17.6"/></svg><svg style="left:270px;top:3px" width="21" height="21"><use href="#grp" x="0.65" y="0.65" width="19.5" height="19.5"/></svg><span class="c" style="left:328.5px"><span style="letter-spacing:0.473px;">testrole</span></span><span class="c" style="left:400px"><span style="letter-spacing:0.442px;">/blog/articles</span></span></div>
<div class="sr" style="top:478px"><span class="c" style="left:0px;font-weight:bold"><span style="letter-spacing:0.115px;">User Permissions</span></span></div>
<div class="sr" style="top:505px"><span class="c" style="left:0px"><span style="letter-spacing:0.271px;">application_logging</span></span><svg style="left:196px;top:3px" width="20" height="20"><use href="#ok" x="0.6" y="0.8" width="19.2" height="19.2"/></svg><svg style="left:270px;top:3px" width="21" height="21"><use href="#grp" x="0.65" y="0.65" width="19.5" height="19.5"/></svg><span class="c" style="left:328.5px"><span style="letter-spacing:0.473px;">testrole</span></span></div>
<div class="sr" style="top:532px"><span class="c" style="left:0px"><span style="letter-spacing:0.024px;">assets</span></span><svg style="left:196px;top:3px" width="20" height="20"><use href="#ok" x="0.6" y="0.8" width="19.2" height="19.2"/></svg><svg style="left:272px;top:5px" width="17" height="17"><use href="#user" x="0.4" y="0.4" width="16" height="16"/></svg><span class="c" style="left:328.5px"><span style="letter-spacing:0.430px;">test</span></span></div>
<div class="sr" style="top:559px"><span class="c" style="left:0px"><span style="letter-spacing:0.372px;">backup</span></span><svg style="left:197px;top:4px" width="18" height="19"><use href="#no" x="0.4" y="0.6" width="17.6" height="17.6"/></svg></div>
<div class="sr" style="top:586px"><span class="c" style="left:0px"><span style="letter-spacing:0.276px;">bounce_mail_inbox</span></span><svg style="left:196px;top:3px" width="20" height="20"><use href="#ok" x="0.6" y="0.8" width="19.2" height="19.2"/></svg><svg style="left:270px;top:3px" width="21" height="21"><use href="#grp" x="0.65" y="0.65" width="19.5" height="19.5"/></svg><span class="c" style="left:328.5px"><span style="letter-spacing:0.473px;">testrole</span></span></div>
</div>
<div class="a" style="left:979px;top:43px;width:16px;height:692px;background:#f1f1f1"></div>
<div class="a" style="left:981px;top:59px;width:13px;height:288px;background:#c1c1c1"></div>
<svg class="a" style="left:983.5px;top:49px" width="8" height="4" viewBox="0 0 8 4"><path d="M0,4L4,0L8,4Z" fill="#a3a3a3"/></svg>
<svg class="a" style="left:983.5px;top:724px" width="8" height="4" viewBox="0 0 8 4"><path d="M0,0L4,4L8,0Z" fill="#505050"/></svg>
<div class="a" style="left:1px;top:735px;width:978px;height:17px;background:#f1f1f1"></div>
<div class="a" style="left:17px;top:737px;width:929px;height:13px;background:#c1c1c1"></div>
<svg class="a" style="left:6px;top:739.5px" width="4" height="8" viewBox="0 0 4 8"><path d="M4,0L0,4L4,8Z" fill="#a3a3a3"/></svg>
<svg class="a" style="left:969px;top:739.5px" width="4" height="8" viewBox="0 0 4 8"><path d="M0,0L4,4L0,8Z" fill="#505050"/></svg>
<div class="a g" style="left:0;top:752px;width:996px;height:44px"></div>
<div class="btn" style="left:914px;top:758px;width:75px;height:32px"><svg style="left:8px;top:8px" width="14" height="14"><use href="#no2" x="0" y="0" width="14" height="14"/></svg><span class="t" style="left:31px"><span style="letter-spacing:-0.074px;">Close</span></span></div>
</div>
</body></html>
